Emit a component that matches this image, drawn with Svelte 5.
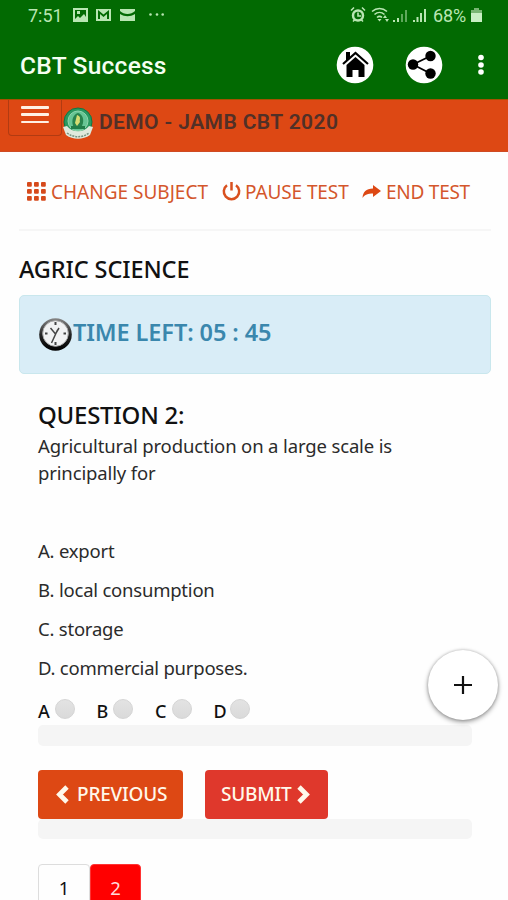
<script>
  const options = ['A. export', 'B. local consumption', 'C. storage', 'D. commercial purposes.'];
  const choices = ['A', 'B', 'C', 'D'];
  const grid = [0, 7, 14];
  let picked = $state('');
</script>

<div class="screen">
  <header>
    <div class="status">
      <span class="clock">7:51</span>
      <svg class="notes" width="92" height="18" viewBox="0 0 92 18">
        <g fill="#b9e6b3">
          <path fill-rule="evenodd" d="M1 2h15v14H1zM3 4v9l3-3 2 2 4-4 2 3V4z" />
          <path d="M5 5h3v3H5z" />
          <path fill-rule="evenodd" d="M24 3h15v12H24zM26 4l5.500 4.500L37 4v9h-2V8l-3.500 3L28 8v5h-2z" />
          <path d="M48 3h15v2c-4 4-11 4-15 0zM48 8c5 3 10 3 15 0v7H48z" />
          <circle cx="78.500" cy="8.500" r="1.300" /><circle cx="85" cy="8.500" r="1.300" /><circle cx="90.700" cy="8.500" r="1.300" />
        </g>
      </svg>
      <svg class="signals" width="80" height="20" viewBox="0 0 80 20">
        <g fill="none" stroke="#b9e6b3" stroke-width="1.600">
          <circle cx="8" cy="10.500" r="5" stroke-width="2.500" />
          <path d="M8 7.500v3.500h3M1 5.500l3-3M12 2.500l3 3M3 16.500l2-2M13 16.500l-2-2" />
          <path d="M22 6.500c4.500-4 10.500-4 15 0M24.500 9.500c3-2.700 7-2.700 10 0M27 12.500c1.500-1.400 3.500-1.400 5 0" />
        </g>
        <g fill="#b9e6b3">
          <path d="M27.500 14h4l-2 2.500zM33 13l2-3 2 3zM35 14h4l-2 3z" />
          <path d="M43 15h2v2h-2zM47 13h2v4h-2z" />
          <path opacity=".5" d="M51 9h2v8h-2zM55 5h2v12h-2z" />
          <path d="M63 15h2v2h-2zM66.500 12h2v5h-2zM70 8h2v9h-2zM74 4h2v13h-2z" />
        </g>
      </svg>
      <span class="percent">68%</span>
      <svg class="battery" width="11" height="16" viewBox="0 0 11 16">
        <path fill="#79b673" d="M3 1h5v2h3v4H0V3h3z" /><path fill="#c9efc4" d="M0 6h11v9H0z" />
      </svg>
    </div>
    <div class="appbar">
      <h1>CBT Success</h1>
      <button class="round" aria-label="Home">
        <svg width="38" height="38" viewBox="0 0 38 38">
          <circle cx="19" cy="19" r="18.300" fill="#fff" />
          <path d="M10 6h4v5l-4 4z" />
          <path d="M7 18 19.500 7 32 18" fill="none" stroke="#000" stroke-width="2.200" />
          <path d="M10.500 19 19.500 11l9 8v12h-6v-7h-6v7h-6z" />
        </svg>
      </button>
      <button class="round share" aria-label="Share">
        <svg width="38" height="38" viewBox="0 0 38 38">
          <circle cx="19" cy="19" r="18.300" fill="#fff" />
          <path d="M25.500 10 8 18.500l17.500 9" fill="none" stroke="#000" stroke-width="1.800" />
          <circle cx="25.500" cy="10" r="5.200" /><circle cx="8" cy="18.500" r="5.200" /><circle cx="25.500" cy="27.500" r="5.200" />
        </svg>
      </button>
      <svg class="kebab" width="8" height="24" viewBox="0 0 8 24" fill="#fff">
        <circle cx="4" cy="4.500" r="2.800" /><circle cx="4" cy="12" r="2.800" /><circle cx="4" cy="19" r="2.800" />
      </svg>
    </div>
  </header>

  <div class="brand">
    <button class="toggle" aria-label="Menu"><i></i><i></i><i></i></button>
    <svg class="crest" width="32" height="33" viewBox="0 0 32 33">
      <circle cx="16" cy="15" r="14" fill="#2a9860" stroke="#117743" />
      <circle cx="16" cy="14" r="10" fill="#67c595" stroke="#8fd6ae" />
      <path d="M11 19c-2-7 1-12 5-13 4 1 7 6 4 13z" fill="#27834e" />
      <path d="M15 8c5 2 2 4 3 7l-3 4-2-3z" fill="#d5dc72" />
      <path d="M9 19h14v3H9z" fill="#217d49" />
      <path d="M1 20l4-1c5 7 17 7 22 0l4 1-3 8c-7 5-17 5-24 0z" fill="#dfe9dd" />
      <path d="M5 26c7 5 15 5 22 0" fill="none" stroke="#759181" stroke-width="1.500" stroke-dasharray="2 1" />
    </svg>
    <span>DEMO - JAMB CBT 2020</span>
  </div>

  <main>
    <nav>
      <a href="#subject">
        <svg width="19" height="19" viewBox="0 0 19 19" fill="#d64a1c">
          {#each grid as y}{#each grid as x}<rect {x} {y} width="4.800" height="4.800" rx="1" />{/each}{/each}
        </svg>
        <span class="change">CHANGE SUBJECT</span>
      </a>
      <a href="#pause">
        <svg width="19" height="20" viewBox="0 0 19 20" fill="none" stroke="#d9501f" stroke-width="2.500">
          <path d="M5 3.200a7.700 7.700 0 1 0 9 0M9.500 0v8.500" />
        </svg>
        <span class="pause">PAUSE TEST</span>
      </a>
      <a href="#end">
        <svg width="19" height="14" viewBox="0 0 19 14" fill="#dd4814">
          <path d="M11 0l8 6-8 6V8.500C6 8.500 3 9.500.5 13 1 7 4 3.500 11 3.500z" />
        </svg>
        <span class="end">END TEST</span>
      </a>
    </nav>
    <h2>AGRIC SCIENCE</h2>
    <div class="alert">
      <svg width="34" height="36" viewBox="0 0 34 36">
        <defs>
          <linearGradient id="rim" x2="0" y2="1"><stop stop-color="#888" /><stop offset=".5" stop-color="#252525" /><stop offset="1" stop-color="#000" /></linearGradient>
        </defs>
        <circle cx="16.500" cy="18.500" r="16.300" fill="url(#rim)" />
        <circle cx="16.500" cy="17.500" r="12.800" fill="#f1f2f3" stroke="#aaa" />
        <path d="M16.500 6v3M16.500 26v3M6 17.500h2.500M24.500 17.500H27" stroke="#444" stroke-width="2" />
        <path d="M11.500 12l5 6 3.500-6M18.500 14l-6 13" fill="none" stroke="#444" stroke-width="1.500" />
      </svg>
      <strong>TIME LEFT: 05 : 45</strong>
    </div>
    <section>
      <h3>QUESTION 2:</h3>
      <p>Agricultural production on a large scale is<br />principally for</p>
      <ul>
        {#each options as option}<li>{option}</li>{/each}
      </ul>
      <div class="choices">
        {#each choices as choice}
          <label><b>{choice}</b><input type="radio" name="answer" value={choice} bind:group={picked} /></label>
        {/each}
      </div>
      <div class="well"></div>
      <div class="actions">
        <button class="previous">
          <svg width="13" height="20" viewBox="0 0 13 20"><path d="M11 2 3.500 9.500 11 17" fill="none" stroke="#fff8eb" stroke-width="4.800" /></svg>
          <span>PREVIOUS</span>
        </button>
        <button class="submit">
          <span>SUBMIT</span>
          <svg width="13" height="20" viewBox="0 0 13 20"><path d="M2 2l7.500 7.500L2 17" fill="none" stroke="#fff8eb" stroke-width="4.800" /></svg>
        </button>
      </div>
      <div class="well second"></div>
      <div class="pages"><a href="#1">1</a><a href="#2" class="current">2</a></div>
    </section>
  </main>
  <button class="fab" aria-label="Add">
    <svg width="20" height="20" viewBox="0 0 20 20"><path d="M10 1v18M1 10h18" stroke="#111" stroke-width="2.200" /></svg>
  </button>
</div>

<style>
  :global(body) { margin: 0; overflow: hidden; }
  .screen { position: relative; width: 508px; height: 900px; overflow: hidden; background: #fefefe; color: #2b2b2b; font: 18.500px/26px "Noto Sans", sans-serif; letter-spacing: -.14px; }
  h1, h2, h3, p, ul { margin: 0; padding: 0; font-weight: 400; }
  button { border: 0; padding: 0; font: inherit; }
  a { color: inherit; text-decoration: none; }
  svg { display: block; flex: none; }
  span, strong { white-space: nowrap; }
  header { height: 99px; background: #026a02; font-family: Roboto, sans-serif; letter-spacing: 0; }
  .status { height: 32px; display: flex; align-items: center; padding-left: 28px; color: #b9e6b3; font-size: 18px; }
  .clock { width: 44px; }
  .notes { margin-top: -2px; }
  .signals { margin: -3px 3px 0 186px; }
  .percent { width: 38px; letter-spacing: -.1px; }
  .battery { margin-top: -2px; }
  .appbar { height: 66px; display: flex; align-items: center; padding-left: 20px; }
  h1 { width: 316px; color: #f5fff1; font-size: 24.500px; font-weight: 500; letter-spacing: .25px; line-height: 28px; padding-top: 1px; }
  .round { width: 38px; height: 38px; background: none; }
  .share { margin-left: 31px; }
  .kebab { margin-left: 34px; }
  .brand { box-sizing: border-box; height: 53px; display: flex; align-items: flex-start; padding-left: 8px; background: #dd4814; border-top: 1px solid #a65000; border-bottom: 1px solid #cf4b24; color: #513027; font: 600 21px/44px Roboto, sans-serif; letter-spacing: .4px; }
  .toggle { box-sizing: border-box; width: 54px; height: 36px; display: flex; flex-direction: column; align-items: center; gap: 4.500px; padding-top: 6px; background: transparent; border: 1px solid #b13b12; border-top: 0; border-radius: 0 0 4px 4px; }
  .toggle i { width: 28px; height: 2.800px; border-radius: 1px; background: #fff1e5; }
  .crest { margin-top: 7px; }
  .brand span { margin-left: 5px; }
  main { padding: 0 17px 0 19px; }
  nav { box-sizing: border-box; height: 79px; display: flex; align-items: center; padding: 2px 0 0 8px; border-bottom: 2px solid #f6f6f6; color: #d4562b; font-size: 19px; }
  nav a { display: flex; align-items: center; gap: 5px; height: 26px; }
  .change { width: 171px; letter-spacing: 0; }
  .pause { width: 117px; margin-left: -1px; letter-spacing: -.1px; }
  .end { letter-spacing: -.25px; }
  h2 { height: 64px; line-height: 76px; font-size: 23.500px; font-weight: 500; letter-spacing: -.1px; color: #111; }
  .alert { box-sizing: border-box; height: 79px; display: flex; padding: 20px; padding-left: 19px; background: #d9edf7; border: 1px solid #c9e7ed; border-radius: 5px; color: #3a87ad; }
  .alert strong { font-size: 23.500px; font-weight: 600; line-height: 33px; letter-spacing: -.1px; }
  section { padding: 26px 19px 0; }
  h3 { height: 33px; line-height: 30px; font-size: 24px; font-weight: 500; letter-spacing: -.25px; color: #111; }
  p { height: 99px; line-height: 26.500px; }
  ul { list-style: none; letter-spacing: -.22px; }
  li { height: 39px; line-height: 38px; }
  .choices { height: 37px; display: flex; }
  label { width: 58.500px; display: flex; align-items: center; padding-top: 8px; box-sizing: border-box; }
  label b { width: 16.500px; font-size: 18px; font-weight: 500; color: #111; }
  input { appearance: none; box-sizing: border-box; width: 20px; height: 20px; margin: 0 0 4px; border: 1px solid #d5d5d5; border-radius: 50%; background: linear-gradient(#e3e3e3, #dadada); }
  .well { height: 21px; border-radius: 5px; background: #f5f5f5; }
  .actions { display: flex; gap: 22px; margin-top: 24px; }
  .actions button { height: 49px; display: flex; align-items: center; color: #fff8eb; border-radius: 4px; font-size: 19px; font-weight: 500; letter-spacing: -.2px; }
  .actions span { margin-top: -1px; }
  .previous { width: 145px; padding-left: 18px; gap: 8px; background: #dd4814; }
  .submit { width: 123px; padding-left: 16px; gap: 7px; background: #df382c; }
  .submit span { width: 69px; }
  .second { height: 20px; }
  .pages { display: flex; margin-top: 25px; text-align: center; line-height: 45px; }
  .pages a { box-sizing: border-box; width: 52px; height: 50px; border: 1px solid #ddd; border-radius: 4px; color: #111; }
  .pages .current { width: 51px; background: #f00; border-color: #f33; color: #ffd9d9; }
  .fab { position: absolute; left: 428px; top: 650px; width: 70px; height: 70px; border-radius: 50%; background: #fff; display: grid; place-items: center; box-shadow: 0 2px 5px #0006, 0 0 3px #0003; }
</style>
